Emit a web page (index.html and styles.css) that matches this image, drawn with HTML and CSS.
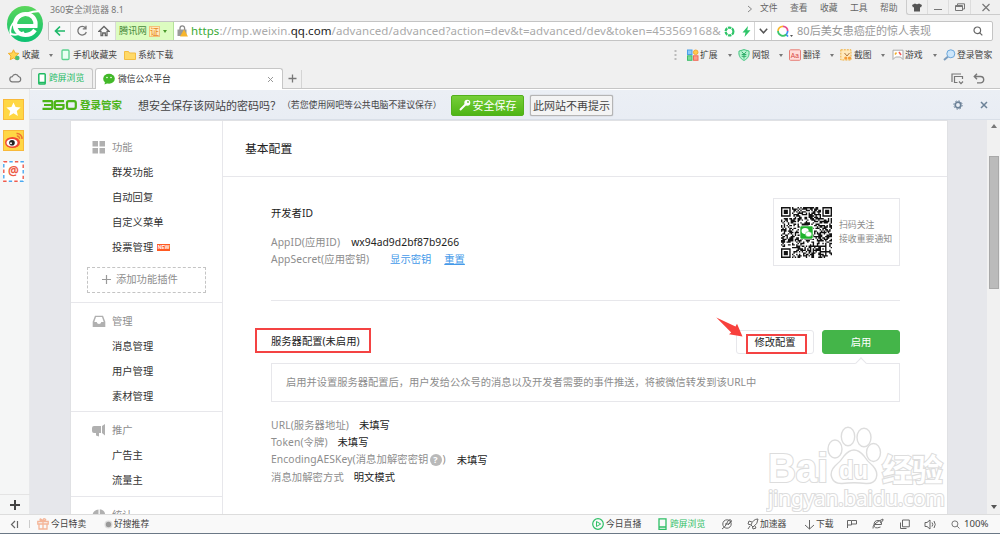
FILE: index.html
```html
<!DOCTYPE html>
<html lang="zh-CN">
<head>
<meta charset="utf-8">
<title>微信公众平台</title>
<link rel="stylesheet" href="styles.css">
</head>
<body>
<div class="browser">
  <header class="chrome">
    <svg class="logo" viewBox="0 0 38 38"><defs><linearGradient id="lg" x1="0" y1="0" x2="0" y2="1"><stop offset="0" stop-color="#5ad65a"/><stop offset="1" stop-color="#0bc173"/></linearGradient></defs><circle cx="19" cy="19" r="18" fill="url(#lg)"/><path d="M9 21h20.500c.7-7-3.500-12-10-12S9 14 9 20s4.500 10 10.500 10c4.500 0 7.500-2 9.500-5" fill="none" stroke="#fff" stroke-width="4.200"/><path d="M5 30C1 20 14 7 34 6" fill="none" stroke="#fff" stroke-width="1.800"/><path d="M5 29q6 2 13-2" fill="none" stroke="#fff" stroke-width="2"/></svg>
    <div class="titlebar">
      <span class="app-name">360安全浏览器 8.1</span>
      <nav class="menus"><svg class="more" viewBox="0 0 6 8"><path d="M1 1l3.500 3L1 7"/></svg><span>文件</span><span>查看</span><span>收藏</span><span>工具</span><span>帮助</span></nav>
      <div class="controls">
        <span><svg width="10" height="9" viewBox="0 0 10 9"><path d="M3 .5L0 2l1 2.500 1-.4V8.500h6V4.100l1 .4L10 2 7 .5Q5 2 3 .5z" fill="#555"/></svg></span>
        <span><svg width="10" height="9" viewBox="0 0 10 9"><path d="M1 6.500h8" stroke="#777"/></svg></span>
        <span><svg width="10" height="9" viewBox="0 0 10 9" fill="none" stroke="#777"><path d="M2.500 2V.8h7V6H8"/><path d="M.5 2.500h7v5h-7zM.5 3.500h7"/></svg></span>
        <span><svg width="10" height="9" viewBox="0 0 10 9"><path d="M1.500 1l7 7M8.500 1l-7 7" stroke="#777" stroke-width="1.200"/></svg></span>
      </div>
    </div>
    <div class="address">
      <span class="nav"><svg width="12" height="12" viewBox="0 0 12 12" fill="none" stroke="#1fb96a" stroke-width="1.700"><path d="M11 6H1.500M6 1.500L1.500 6 6 10.500"/></svg></span>
      <span class="nav"><svg width="12" height="12" viewBox="0 0 12 12" fill="none" stroke="#777" stroke-width="1.300"><path d="M9.500 3A4.300 4.300 0 1 0 10.300 7M10 .8v3H6.800"/></svg></span>
      <span class="nav"><svg width="12" height="12" viewBox="0 0 12 12" fill="none" stroke="#666" stroke-width="1.300"><path d="M1 6.300L6 1.500l5 4.800H9V10.500H7.300V8H4.700v2.500H3V6.300z"/></svg></span>
      <span class="site">腾讯网<b>证</b><i class="caret green"></i></span>
      <span class="lock"><svg width="11" height="12" viewBox="0 0 11 12"><path d="M3 5V3.200a2.300 2.300 0 0 1 4.600 0V5" fill="none" stroke="#888" stroke-width="1.300"/><rect x=".5" y="4.500" width="9" height="6.500" fill="#999"/><path d="M7 4.500l4 7H3z" fill="#f7b52c"/></svg></span>
      <span class="url"><em>https</em>://mp.weixin.<strong>qq.com</strong>/advanced/advanced?action=dev&amp;t=advanced/dev&amp;token=453569168&amp;</span>
      <span class="mini"><svg width="11" height="11" viewBox="0 0 11 11"><circle cx="5.500" cy="5.500" r="3.900" fill="none" stroke="#2fc569" stroke-width="2.200" stroke-dasharray="3.300 .8"/></svg></span>
      <span class="mini"><svg width="9" height="11" viewBox="0 0 9 11"><path d="M6 0L.5 6.500h3L2.500 11 8.500 4.300H5.300z" fill="#2fc569"/></svg></span>
      <span class="drop"><svg width="9" height="6" viewBox="0 0 9 6"><path d="M.8.8l3.700 4L8.200.8" fill="none" stroke="#555" stroke-width="1.500"/></svg></span>
      <span class="search"><svg width="17" height="13" viewBox="0 0 17 13" fill="none" stroke-width="1.700"><path d="M1 6a5 5 0 0 1 5-4.700" stroke="#f8b62b"/><path d="M6 1.300A4.700 4.700 0 0 1 10.700 6" stroke="#e84d8c"/><path d="M10.700 6a5 5 0 0 1-1.500 3.500L11 11.500" stroke="#3d8df2"/><path d="M9.200 9.500A4.900 4.900 0 0 1 1 6" stroke="#3cc66b"/><path d="M13 10h3l-1.500 2z" fill="#555" stroke="none"/></svg><span>80后美女患癌症的惊人表现</span></span>
      <span class="go"><svg width="10" height="10" viewBox="0 0 10 10" fill="none" stroke="#666" stroke-width="1.200"><circle cx="4.300" cy="4.300" r="3.300"/><path d="M6.800 6.800l2.500 2.500"/></svg></span>
    </div>
    <div class="bookmarks">
      <svg width="13" height="12" viewBox="0 0 13 12"><path d="M5.500.8L7 4l3.800.4L8 7l.8 3.700L5.500 9l-3.300 1.700L3 7 .3 4.400 4 4z" fill="#ffd553" stroke="#f2b02c"/><circle cx="9.300" cy="9" r="2.300" fill="#49bd76"/></svg><span>收藏</span><i class="caret"></i>
      <svg width="9" height="12" viewBox="0 0 9 12"><rect x="1" y="1" width="7" height="9.500" rx="1" fill="#e9fff2" stroke="#5bd28e" stroke-width="1.300"/></svg><span>手机收藏夹</span>
      <svg width="12" height="11" viewBox="0 0 12 11"><path d="M.5 1.500h4l1 1.500h6v6.500H.5z" fill="#ffd968" stroke="#f3bd42"/></svg><span>系统下载</span>
      <svg width="3" height="10" viewBox="0 0 3 10" fill="#bbb"><path d="M.5 0h2v2h-2zM.5 4h2v2h-2zM.5 8h2v2h-2z"/></svg>
      <svg width="12" height="12" viewBox="0 0 12 12"><rect x=".5" y="1" width="4.500" height="4.500" fill="#8bc9f8" stroke="#4a9fe8"/><circle cx="8.700" cy="3.300" r="2.300" fill="#ffc94a" stroke="#f2a73b"/><rect x=".5" y="6.800" width="4.500" height="4.500" fill="#7adb97" stroke="#3fbd6c"/><rect x="6.500" y="6.800" width="4.500" height="4.500" fill="#ff9b88" stroke="#f06b58"/></svg><span>扩展</span><i class="caret"></i>
      <svg width="12" height="12" viewBox="0 0 12 12"><path d="M6 .6l5 1.500c.5 4-.7 7.500-5 9.300C1.700 9.600.5 6 1 2.100z" fill="#b8f3d0" stroke="#40c37d"/><path d="M3.700 2.700L6 5.200l2.300-2.500M3.700 5.500h4.600M3.700 7.300h4.600M6 5v4.500" fill="none" stroke="#2fad69"/></svg><span>网银</span><i class="caret"></i>
      <svg width="12" height="12" viewBox="0 0 12 12"><rect x=".5" y=".8" width="11" height="10.500" rx="1" fill="#ffdcd8" stroke="#e78078"/><text x="1.800" y="8.800" class="aa">Aa</text></svg><span>翻译</span><i class="caret"></i>
      <svg width="12" height="12" viewBox="0 0 12 12"><rect x=".8" y=".8" width="10.200" height="10.200" fill="#ffe9bd" stroke="#efad3b" stroke-dasharray="2 1"/><path d="M4.500 4l2.500 3 2.500-3" stroke="#aa7745" fill="none"/><circle cx="5.800" cy="9" r="1.600" fill="#f59b37"/><circle cx="9.500" cy="9" r="1.600" fill="#f59b37"/></svg><span>截图</span><i class="caret"></i>
      <svg width="12" height="12" viewBox="0 0 12 12"><path d="M1 1.200h10v9.300L8.500 8h-5L1 10.500z" fill="#fff" stroke="#aaa"/><path d="M3 5.500l1.500-2" stroke="#f2b02c" stroke-width="1.500"/><path d="M7 3l2 3" stroke="#f05a5a" stroke-width="1.500"/></svg><span>游戏</span><i class="caret"></i>
      <svg width="13" height="12" viewBox="0 0 13 12"><circle cx="7.800" cy="4.800" r="4" fill="#cce6fb" stroke="#6ba6da"/><path d="M4.800 7.700L1 11" stroke="#7c9dbd" stroke-width="2"/></svg><span>登录管家</span>
    </div>
    <div class="tabs">
      <span class="cloud"><svg width="13" height="10" viewBox="0 0 13 10"><path d="M3.500 8.800a2.600 2.600 0 0 1-.2-5.200A3.300 3.300 0 0 1 9.500 3.500a2.700 2.700 0 0 1 0 5.300z" fill="none" stroke="#777" stroke-width="1.200"/></svg></span>
      <div class="tab pinned"><svg width="8" height="12" viewBox="0 0 8 12"><rect x=".8" y=".8" width="6.400" height="10.200" rx=".8" fill="#fff" stroke="#20ba62" stroke-width="1.500"/><path d="M1 9.500h6" stroke="#20ba62" stroke-width="1.500"/></svg><span>跨屏浏览</span></div>
      <div class="tab active"><svg width="12" height="12" viewBox="0 0 12 12"><ellipse cx="6" cy="5.700" rx="5.800" ry="5" fill="#43b929"/><path d="M2 9l-.5 2.500L5 10z" fill="#43b929"/><circle cx="4" cy="4.500" r=".8" fill="#fff"/><circle cx="8" cy="4.500" r=".8" fill="#fff"/></svg><span>微信公众平台</span><svg class="close" width="7" height="7" viewBox="0 0 7 7"><path d="M1 1l5 5M6 1L1 6" stroke="#999"/></svg></div>
      <span class="newtab"><svg width="9" height="9" viewBox="0 0 9 9"><path d="M4.500.5v8M.5 4.500h8" stroke="#777" stroke-width="1.300"/></svg></span>
      <div class="tab-tools"><svg width="13" height="12" viewBox="0 0 13 12" fill="none" stroke="#777" stroke-width="1.200"><path d="M1 9V1h9M11.500 6V3.500H3.500v6h3M8 8.500l2 2.200 2-2.200"/></svg><svg width="12" height="11" viewBox="0 0 12 11" fill="none" stroke="#777" stroke-width="1.400"><path d="M4 .8L1.300 3.500 4 6.200M1.500 3.500H7.500a3.200 3.200 0 0 1 0 6.400H4"/></svg></div>
    </div>
  </header>

  <div class="workspace">
    <aside class="rail">
      <svg width="21" height="21" viewBox="0 0 21 21"><rect width="21" height="21" fill="#f8b93a"/><rect x="1" y="1" width="19" height="19" fill="#ffd744"/><path d="M10.500 3.500l2.100 4.600 5 .5-3.800 3.300 1.100 5-4.400-2.600-4.400 2.600 1.100-5-3.800-3.300 5-.5z" fill="#fff"/></svg>
      <svg width="21" height="21" viewBox="0 0 21 21"><rect width="21" height="21" fill="#f8b93a"/><rect x="1" y="1" width="19" height="19" fill="#ffd744"/><ellipse cx="9.500" cy="12.500" rx="7.500" ry="5.500" fill="#ef4a33"/><ellipse cx="9" cy="12.800" rx="5.500" ry="3.800" fill="#fff"/><circle cx="9" cy="12.700" r="2.800" fill="#222"/><circle cx="8" cy="13.300" r="1" fill="#fff"/><path d="M13.500 3.500a5 5 0 0 1 5.500 5.500M13.800 6a2.500 2.500 0 0 1 2.700 2.800" fill="none" stroke="#ee7433" stroke-width="1.500"/></svg>
      <svg width="21" height="21" viewBox="0 0 21 21"><rect width="21" height="21" fill="#fff"/><rect x=".8" y=".8" width="19.400" height="19.400" fill="none" stroke="#ef5b4c" stroke-width="1.400" stroke-dasharray="3.400 7.680"/><rect x=".8" y=".8" width="19.400" height="19.400" fill="none" stroke="#4ba9f0" stroke-width="1.400" stroke-dasharray="3.400 7.680" stroke-dashoffset="-5.540"/><text x="10.500" y="14.200" text-anchor="middle" class="at">@</text></svg>
      <span class="rail-add"><svg width="10" height="10" viewBox="0 0 10 10"><path d="M5 0v10M0 5h10" stroke="#444" stroke-width="2"/></svg></span>
    </aside>
    <div class="view">
      <div class="infobar">
        <svg class="brand" width="35" height="10" viewBox="0 0 35 10" fill="none" stroke="#4bb418" stroke-width="2.200"><path d="M.5 1.200h9q.8 0 .8 1v5.600q0 1-.8 1H.5M2 5h8"/><path d="M22 1.200h-7.500q-1.700 0-1.700 1.500v4.600q0 1.500 1.700 1.500h5.500q1.500 0 1.500-1.500V5H13"/><rect x="25" y="1.200" width="8.800" height="7.600" rx="1.800"/></svg>
        <b class="brand-text">登录管家</b>
        <span class="ask">想安全保存该网站的密码吗？</span><span class="hint">（若您使用网吧等公共电脑不建议保存）</span>
        <button class="save"><svg width="12" height="12" viewBox="0 0 12 12"><circle cx="8.300" cy="3.700" r="3" fill="#fff"/><circle cx="9" cy="3" r=".9" fill="#64bf2c"/><path d="M6.500 5.500L1 11" stroke="#fff" stroke-width="2"/></svg>安全保存</button>
        <button class="never">此网站不再提示</button>
        <span class="bar-tools"><svg width="10" height="10" viewBox="0 0 10 10" fill="none" stroke="#6c8298"><circle cx="5" cy="5" r="2.800" stroke-width="1.700"/><circle cx="5" cy="5" r="4.200" stroke-dasharray="1.500 1.800"/></svg><svg width="8" height="8" viewBox="0 0 8 8"><path d="M1 1l6 6M7 1L1 7" stroke="#6c8298" stroke-width="1.500"/></svg></span>
      </div>
      <div class="scroller">
        <div class="page">
          <nav class="side">
            <section>
              <h3><svg width="13" height="13" viewBox="0 0 13 13" fill="#b0b0b0"><path d="M0 0h5.500v5.500H0zM7 0h5.500v5.500H7zM0 7h5.500v5.500H0zM7 7h5.500v5.500H7z"/></svg>功能</h3>
              <a>群发功能</a><a>自动回复</a><a>自定义菜单</a><a>投票管理<i class="new">NEW</i></a>
              <div class="add"><svg width="9" height="9" viewBox="0 0 9 9"><path d="M4.500 0v9M0 4.500h9" stroke="#999" stroke-width="1.200"/></svg>添加功能插件</div>
            </section>
            <section>
              <h3><svg width="14" height="13" viewBox="0 0 14 13"><path d="M3 .8h8l2.300 6V12H.7V6.800z" fill="#b0b0b0"/><path d="M4 2h6l1.700 5H9.300q-.4 2-2.300 2T4.700 7H2.300z" fill="#fff"/></svg>管理</h3>
              <a>消息管理</a><a>用户管理</a><a>素材管理</a>
            </section>
            <section>
              <h3><svg width="14" height="13" viewBox="0 0 14 13" fill="#b0b0b0"><path d="M0 4q0-2 2-2h7v7H7v3.500L4 11.500V9H2Q0 9 0 7zM10 2l3-2v11.500L10 9z"/></svg>推广</h3>
              <a>广告主</a><a>流量主</a>
            </section>
            <section>
              <h3><svg width="13" height="13" viewBox="0 0 13 13" fill="#b0b0b0"><path d="M6 .5a6 6 0 1 0 6 6.500H6zM7.300.3v5.400h5.400A6 6 0 0 0 7.300.3z"/></svg>统计</h3>
            </section>
          </nav>
          <main class="main">
            <h2>基本配置</h2>
            <div class="developer">
              <div class="ids">
                <h4>开发者ID</h4>
                <p><span class="k">AppID(应用ID)</span><span class="v appid">wx94ad9d2bf87b9266</span></p>
                <p><span class="k">AppSecret(应用密钥)</span><a class="show">显示密钥</a><a>重置</a></p>
              </div>
              <div class="qr-card">
                <svg class="qr" id="qr" viewBox="0 0 37 37"></svg>
                <p>扫码关注<br>接收重要通知</p>
              </div>
            </div>
            <div class="server">
              <div class="server-head">
                <h4>服务器配置(未启用)<i class="mark mark-title"></i></h4>
                <span class="btn">修改配置<i class="mark mark-btn"></i><svg class="arrow" viewBox="0 0 28 22"><path d="M.3.600L19.500 9.500 21 6.700 26.500 19.500 13 17.300 15.200 15.500z" fill="#f8403c"/></svg></span>
                <span class="btn primary">启用</span>
              </div>
              <div class="tip">启用并设置服务器配置后，用户发给公众号的消息以及开发者需要的事件推送，将被微信转发到该URL中<i class="notch"></i></div>
              <div class="fields">
                <p><span class="k">URL(服务器地址)</span><span class="v">未填写</span></p>
                <p><span class="k">Token(令牌)</span><span class="v">未填写</span></p>
                <p><span class="k aes">EncodingAESKey(消息加解密密钥<b class="help">?</b>)</span><span class="v">未填写</span></p>
                <p><span class="k">消息加解密方式</span><span class="v">明文模式</span></p>
              </div>
            </div>
          </main>
        </div>
        <div class="scrollbar"><i class="up"></i><i class="thumb"></i><i class="down"></i></div>
        <svg class="watermark" viewBox="0 0 182 90">
          <text x="2" y="58" font-size="40" textLength="60" lengthAdjust="spacingAndGlyphs" class="wm-bold">Bai</text>
          <g class="paw"><ellipse cx="69" cy="25" rx="7" ry="9"/><ellipse cx="82" cy="12.500" rx="6.700" ry="9.300"/><ellipse cx="98" cy="13.500" rx="7" ry="9.300"/><ellipse cx="107.500" cy="28.500" rx="7" ry="9"/><path d="M78 32q10-12 20 0 3 5 9 10c7 8 4 18-7 17.500q-12-1.500-24 0C65 60 62 49 69 42q6-5 9-10z"/></g>
          <text x="73" y="55" font-size="25" textLength="29" lengthAdjust="spacingAndGlyphs" class="wm-du">du</text>
          <text x="116" y="56.500" font-size="31" textLength="61" class="wm-cn">经验</text>
          <text x="2" y="82" font-size="21" textLength="177" class="wm-url">jingyan.baidu.com</text>
        </svg>
      </div>
    </div>
  </div>

  <footer class="status">
    <span class="s-icon"><svg width="9" height="9" viewBox="0 0 9 9" fill="none" stroke="#666" stroke-width="1.200"><path d="M5 1L1.500 4.500 5 8M7.500 1v7"/></svg></span>
    <i class="sep"></i>
    <svg width="12" height="12" viewBox="0 0 12 12" fill="none" stroke="#f4b598" stroke-width="1.300"><path d="M.8 3.500h10.400V6H.8zM2 6v5h8V6M6 3v8M6 3Q3 3 3 1.500T6 3q0-3 2-2T6 3"/></svg><span class="s-sale">今日特卖</span>
    <svg width="9" height="9" viewBox="0 0 9 9"><circle cx="4.500" cy="4.500" r="4" fill="#ddd"/><circle cx="4.500" cy="4.500" r="2.700" fill="#999"/></svg><span>好搜推荐</span>
    <svg width="12" height="12" viewBox="0 0 12 12"><circle cx="6" cy="6" r="5.300" fill="none" stroke="#2fbf66" stroke-width="1.200"/><path d="M4.500 3.500L8.700 6 4.500 8.500z" fill="none" stroke="#2fbf66"/></svg><span>今日直播</span>
    <svg width="9" height="12" viewBox="0 0 9 12"><path d="M1 .8h7v10.500H1zM1 9h7" fill="none" stroke="#2fbf66" stroke-width="1.300"/></svg><span class="g">跨屏浏览</span>
    <svg width="12" height="12" viewBox="0 0 12 12" fill="none" stroke="#666"><circle cx="6" cy="6" r="4.200"/><path d="M1 11Q4 10 7 3q1-2 3-1T8 6H4M7 7l3-4"/></svg>
    <svg width="12" height="12" viewBox="0 0 12 12" fill="none" stroke="#666"><path d="M11 1Q6 1 4 7l2 2q5-3 5-8zM5 4L2 3 1 6l3 1M8 8l1 2-3 1-.500-2M3 8l-2 3"/></svg><span>加速器</span>
    <svg width="11" height="11" viewBox="0 0 11 11" fill="none" stroke="#666"><path d="M5.500 1v9M1 6l4.500 4L10 6"/></svg><span>下载</span>
    <svg width="12" height="12" viewBox="0 0 12 12" fill="none" stroke="#666"><path d="M1.500 10V2.500h4V7h-4M5.500 2.500h5V6h-5"/></svg>
    <svg width="12" height="12" viewBox="0 0 12 12" fill="none" stroke="#666"><path d="M2.500 6.500h7Q10 2.500 6 2.500t-4 4.500 6.500 2M1 10.500Q0 6 11 1q1 2-3 4"/></svg>
    <svg width="11" height="11" viewBox="0 0 11 11" fill="none" stroke="#666"><path d="M3.500 1h6.800v6.800H3.500zM1.500 3.500v6h6"/></svg>
    <svg width="13" height="11" viewBox="0 0 13 11" fill="none" stroke="#666"><path d="M1 3.500h2L6 1v9L3 7.500H1zM8 3.500q1.500 2 0 4M10 2q2.500 3.500 0 7"/></svg>
    <svg width="9" height="9" viewBox="0 0 9 9" fill="none" stroke="#777"><circle cx="3.900" cy="3.900" r="3"/><path d="M6.200 6.200L8.500 8.500"/></svg><span class="zoom">100%</span>
  </footer>
</div>
<script src="qr.js"></script>
</body>
</html>
```

FILE: qr.js
```js
// Draws the follow-us QR code into #qr: random data modules, finder and alignment patterns, centre badge.
(function () {
  var n = 37, seed = 20150, d = '';
  function rnd() { seed = (seed * 1103515245 + 12345) % 2147483648; return seed / 2147483648; }
  function ring(x, y, cx, cy) { return Math.max(Math.abs(x - cx), Math.abs(y - cy)); }
  for (var y = 0; y < n; y++) {
    for (var x = 0; x < n; x++) {
      var on = rnd() > 0.5;
      [[3, 3], [33, 3], [3, 33]].forEach(function (c) {
        var r = ring(x, y, c[0], c[1]);
        if (r <= 4) on = r < 2 || r === 3;
      });
      var a = ring(x, y, 30, 30);
      if (a <= 2) on = a !== 1;
      if (on) d += 'M' + x + ' ' + y + 'h1v1h-1z';
    }
  }
  document.getElementById('qr').innerHTML =
    '<path d="' + d + '" fill="#111"/>' +
    '<rect x="13.500" y="13.500" width="10" height="10" rx="1" fill="#fff"/>' +
    '<rect x="14" y="14" width="9" height="9" rx=".8" fill="#1fb32c"/>' +
    '<ellipse cx="17.500" cy="17.500" rx="2.600" ry="2.200" fill="#fff"/>' +
    '<ellipse cx="20" cy="19.700" rx="2.300" ry="1.900" fill="#fff" stroke="#1fb32c" stroke-width=".3"/>';
})();
```

FILE: styles.css
```css
* { box-sizing: border-box; margin: 0; padding: 0; }
body { width: 1000px; height: 534px; overflow: hidden; background: #f0f0f0; color: #555; font: 8.8px/1 "Noto Sans", "Noto Sans CJK SC", sans-serif; white-space: nowrap; }
svg { display: block; flex: none; }
i, em { font-style: normal; }
h2, h3, h4 { font-weight: normal; }
.browser { display: flex; flex-direction: column; height: 534px; }

/* Browser header */
.chrome { display: grid; grid-template-columns: 48px 1fr; grid-template-rows: 21px 20px 27px 21px; height: 89px; background: #f0f0f0; border-bottom: 1px solid #c6c6c6; }
.logo { grid-row: 1 / 3; width: 38px; height: 38px; margin: 5px 0 0 6px; }
.titlebar { display: flex; }
.app-name { padding: 6px 0 0 2px; font-size: 8.8px; color: #777; }
.menus { display: flex; margin-left: auto; padding-top: 4px; width: 159px; }
.menus span { flex: none; width: 30px; color: #666; }
.more { width: 6px; height: 8px; margin: 1px 7px 0 0; fill: none; stroke: #888; }
.controls { display: grid; grid-template-columns: 21px 21px 22px 29px; height: 15px; border: solid #ccc; border-width: 0 0 1px 1px; border-radius: 0 0 0 3px; }
.controls span { display: flex; align-items: center; justify-content: center; border-right: 1px solid #ddd; }
.controls span:last-child { border: 0; }
.address { display: grid; grid-template-columns: 22px 22px 23px 58px 17px 530px 17px 16px 18px 200px 1fr; width: 945px; height: 20px; background: #fff; border: 1px solid #c4c4c4; border-radius: 2px; align-items: stretch; }
.address > span { display: flex; align-items: center; }
.nav { justify-content: center; background: #f7f7f7; border-right: 1px solid #d9d9d9; }
.site { gap: 2px; padding-left: 3px; background: #dcfcc0; border-right: 1px solid #b5e29a; color: #4a8a3c; font-size: 9.3px; }
.site b { font-weight: normal; width: 11px; height: 11px; line-height: 10px; font-size: 9px; color: #e88a22; background: #ffe9b8; border: 1px solid #f3c27a; }
.lock { padding-left: 3px; }
.url { font-size: 11.500px; color: #aaa; letter-spacing: .075px; }
.url em { color: #39a935; }
.url strong { font-weight: normal; color: #222; }
.mini { justify-content: center; }
.drop { justify-content: center; border: solid #d5d5d5; border-width: 0 1px; }
.search { padding-left: 5px; gap: 3px; font-size: 11.050px; color: #999; }
.go { padding-left: 1px; }
.caret { width: 0; height: 0; border: 2.500px solid transparent; border-top: 3px solid #777; border-bottom: 0; }
.caret.green { border-top-color: #4a9a2c; margin-left: 1px; }
.bookmarks { grid-column: 1 / 3; display: grid; grid-template-columns: 14px 27px 12px 12px 51px 14px 536px 13px 13px 28px 10px 14px 27px 10px 14px 27px 10px 14px 27px 11px 13px 28px 10px 14px 1fr; padding: 1px 0 0 8px; align-items: center; color: #444; }
.aa { font: 6.500px "Liberation Sans", sans-serif; fill: #d8473f; }
.tabs { grid-column: 1 / 3; display: flex; align-items: flex-end; height: 20px; }
.cloud { width: 31px; padding: 0 0 5px 9px; }
.tab { display: flex; align-items: center; height: 20px; border: 1px solid #c6c6c6; border-bottom: 0; border-radius: 3px 3px 0 0; }
.pinned { width: 62px; gap: 3px; padding-left: 6px; margin-right: 2px; color: #20ba62; background: #f0f0f0; }
.active { width: 188px; height: 21px; gap: 3px; padding-left: 7px; background: #fff; color: #333; margin-bottom: -1px; }
.close { margin: 0 8px 0 auto; }
.newtab { width: 19px; height: 18px; padding: 4px 0 0 5px; border-right: 1px solid #d4d4d4; }
.tab-tools { display: flex; gap: 9px; margin: 0 15px 3px auto; }

/* Left rail and view */
.workspace { display: flex; height: 425px; }
.rail { display: flex; flex-direction: column; align-items: center; gap: 10px; width: 30px; padding: 10px 2px 0 0; background: #f5f6f6; border-right: 1px solid #e8e9eb; }
.at { font: bold 12px "Noto Sans", sans-serif; fill: #ed5a45; }
.rail-add { width: 30px; margin: auto -2px 0 0; height: 20px; padding: 5px 0 0 10px; border-top: 1px solid #e4e4e4; }
.view { width: 970px; }
.infobar { display: flex; align-items: center; height: 31px; padding: 1px 12px 0; background: linear-gradient(#ebeff5, #e9edf4); border-top: 1px solid #fff; border-bottom: 1px solid #d9dfe8; color: #444; }
.brand-text { margin-left: 3px; font-size: 10.500px; color: #4bb418; }
.ask { margin-left: 16px; font-size: 11px; width: 144px; }
.hint { width: 169px; font-size: 8.900px; }
.infobar button { display: flex; align-items: center; justify-content: center; height: 21px; border-radius: 2px; font: 11px/1 "Noto Sans", "Noto Sans CJK SC", sans-serif; }
.save { width: 73px; gap: 2px; color: #fff; border: 1px solid #52b01c; background: linear-gradient(#76cf39, #4fb515); }
.infobar .never { width: 83px; margin-left: 6px; color: #444; background: #f4f4f4; border: 1px solid #b5b5b5; box-shadow: 0 0 1px #888; }
.bar-tools { display: flex; align-items: center; gap: 17px; margin-left: auto; }
.scroller { position: relative; display: flex; justify-content: space-between; height: 394px; padding-left: 40px; overflow: hidden; background: #e6e7eb; }
.page { display: flex; width: 878px; height: 500px; background: #fff; border: 1px solid #e0e1e4; }
.scrollbar { display: flex; flex-direction: column; align-items: center; width: 13px; height: 394px; background: #f1f1f1; }
.up, .down { width: 0; height: 0; border: 3px solid transparent; }
.up { border-bottom: 4px solid #777; border-top: 0; margin-top: 4px; }
.down { border-top: 4px solid #555; border-bottom: 0; margin: auto 0 5px; }
.thumb { width: 10px; height: 133px; margin-top: 28px; background: #bbb; border: 1px solid #a9a9a9; }

/* Page sidebar */
.side { width: 152px; font-size: 10.300px; color: #333; border-right: 1px solid #e7e7eb; }
.side section { height: 109px; padding-top: 6px; border-bottom: 1px solid #e7e7eb; }
.side section:first-child { height: 182px; padding-top: 14px; }
.side section:nth-child(3) { height: 85px; }
.side h3 { display: flex; align-items: center; height: 25px; padding-left: 21px; font-size: 10.300px; color: #8d8d8d; }
.side h3 svg { width: 14px; margin-right: 6px; }
.side a { display: flex; align-items: center; height: 24.900px; padding-left: 41px; }
.new { width: 13px; height: 7px; margin-left: 4px; background: #ff5a22; color: #fff; font: bold 5px/7px "Liberation Sans", sans-serif; text-align: center; }
.add { display: flex; align-items: center; gap: 5px; width: 119px; height: 26px; margin: 7px 0 0 16px; padding-left: 14px; border: 1.500px dashed #c4c4c4; color: #8d8d8d; }

/* Page content */
.main { width: 724px; font-size: 10.300px; color: #222; }
.main h2 { display: flex; align-items: center; height: 56px; padding-left: 22px; font-size: 11.800px; border-bottom: 1px solid #e7e7eb; }
.main h4 { font-size: 10.300px; }
.k { color: #8d8d8d; letter-spacing: .1px; }
.v { margin-left: 10px; }
.appid { margin-left: 11px; letter-spacing: .05px; }
.developer { display: flex; justify-content: space-between; width: 629px; height: 124px; margin-left: 48px; border-bottom: 1px solid #e7e7eb; }
.ids { padding-top: 29px; }
.ids h4 { height: 27px; line-height: 14px; }
.main p { display: flex; align-items: center; height: 17.600px; }
.ids a { color: #459ae9; text-decoration: underline; margin-left: 13px; }
.ids .show { margin-left: 21px; text-decoration: none; }
.qr-card { display: flex; align-items: center; width: 127px; height: 68px; margin-top: 21px; padding-left: 7px; border: 1px solid #e7e7eb; }
.qr { width: 51px; height: 51px; }
.main .qr-card p { display: block; height: auto; margin-left: 7px; font-size: 8.900px; line-height: 14px; color: #8d8d8d; }
.server { width: 629px; margin-left: 48px; }
.server-head { display: flex; align-items: center; height: 24px; margin-top: 29px; }
.server-head h4 { position: relative; margin: 0 auto 2px 0; }
.btn { position: relative; display: flex; align-items: center; justify-content: center; width: 78px; height: 24px; border: 1px solid #e7e7eb; border-radius: 3px; }
.primary { margin-left: 8px; color: #fff; background: #44b549; border-color: #44b549; }
.mark { position: absolute; border: 2px solid #f44343; }
.mark-title { left: -16px; top: -8px; width: 116px; height: 25px; }
.mark-btn { left: 9px; top: 3px; width: 61px; height: 20px; }
.arrow { position: absolute; left: -21px; top: -14px; width: 28px; height: 22px; }
.tip { position: relative; display: flex; align-items: center; height: 39px; margin-top: 9px; padding-left: 14px; border: 1px solid #e7e7eb; color: #8d8d8d; font-size: 10.250px; }
.notch { position: absolute; right: 34px; top: -5px; width: 8px; height: 8px; background: #fff; border: solid #e7e7eb; border-width: 1px 0 0 1px; transform: rotate(45deg); }
.fields { padding-top: 14px; }
.help { display: inline-block; width: 12px; height: 12px; margin: 0 1px; border-radius: 50%; background: #b9b9b9; color: #fff; font-size: 9px; line-height: 12px; text-align: center; }
.aes + .v { margin-left: 11px; }

.watermark { position: absolute; left: 736px; top: 304px; width: 182px; height: 90px; fill: #fff; stroke: #ddd; stroke-width: 1.400px; }
.watermark text { paint-order: stroke; stroke-width: 2.200px; }
.wm-bold, .wm-du { font-family: "Liberation Sans", sans-serif; font-weight: bold; }
.wm-cn { font-family: "Noto Sans CJK SC", sans-serif; font-weight: bold; }
.wm-url { font-family: "Noto Sans", sans-serif; }

/* Status bar */
.status { display: grid; grid-template-columns: 19px 8px 14px 53px 10px 478px 14px 52px 12px 51px 26px 13px 44px 12px 30px 26px 27px 25px 27px 13px 1fr; align-items: center; height: 20px; padding-left: 10px; background: #f9f9f9; border-top: 1px solid #ddd; border-bottom: 1px solid #6b7886; color: #444; }
.sep { width: 1px; height: 8px; background: #ccc; }
.g { color: #2fbf66; }
.zoom { font-size: 9.600px; }
```
